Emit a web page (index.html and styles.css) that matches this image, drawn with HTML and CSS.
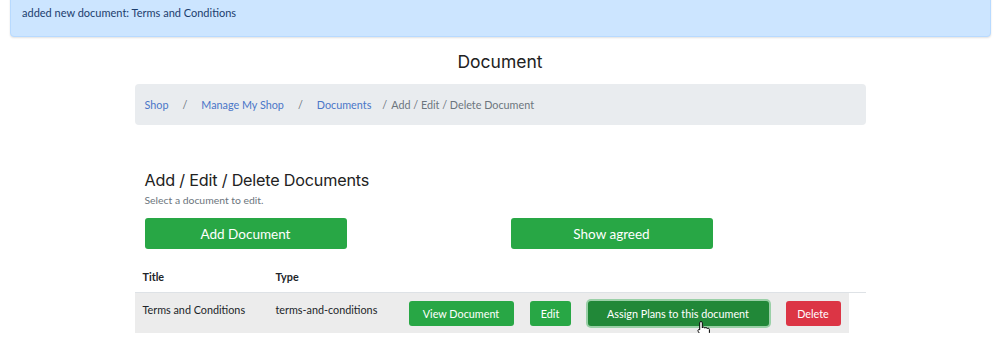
FILE: index.html
```html
<!DOCTYPE html>
<html lang="en">

<head>
  <meta charset="UTF-8">
  <meta name="viewport" content="width=device-width, initial-scale=1.0">
  <title>Document</title>
  <link rel="stylesheet" href="styles.css">
</head>

<body>
  <!-- 提示 -->
  <div class="alert">added new document: Terms and Conditions</div>

  <h2 class="page-title">Document</h2>

  <div class="container">
    <div class="breadcrumb">
      <a href="#">Shop</a>
      <span class="sep">/</span>
      <a href="#">Manage My Shop</a>
      <span class="sep">/</span>
      <a href="#">Documents</a>
      <span class="sep last">/</span>
      <span class="current">Add / Edit / Delete Document</span>
    </div>

    <div class="section">
      <h3>Add / Edit / Delete Documents</h3>
      <p class="hint">Select a document to edit.</p>
      <div class="actions">
        <button class="btn btn-big">Add Document</button>
        <button class="btn btn-big">Show agreed</button>
      </div>
    </div>

    <div class="list">
      <div class="row head">
        <div class="col-title">Title</div>
        <div class="col-type">Type</div>
      </div>
      <div class="row item">
        <div class="col-title">Terms and Conditions</div>
        <div class="col-type">terms-and-conditions</div>
        <div class="col-btns">
          <button class="btn btn-sm view">View Document</button>
          <button class="btn btn-sm edit">Edit</button>
          <button class="btn btn-sm assign">Assign Plans to this document
            <svg class="cursor" width="14" height="18" viewBox="0 0 14 18">
              <path d="M4 1.5c.8 0 1.3.5 1.3 1.3v5.2c.2-.6.7-.9 1.3-.9.7 0 1.2.5 1.2 1.1.2-.4.6-.7 1.2-.7.7 0 1.2.5 1.2 1.2.2-.3.6-.5 1-.5.7 0 1.2.5 1.2 1.2v3.4c0 2.3-1.6 4.2-4 4.2H6.6c-1.2 0-2-.5-2.7-1.4L1.2 11.4c-.4-.6-.3-1.3.2-1.7.5-.4 1.2-.3 1.6.2l-.3-.4V2.8c0-.8.5-1.3 1.3-1.3z" fill="#fff" stroke="#000" stroke-width="1"/>
            </svg>
          </button>
          <button class="btn btn-sm delete">Delete</button>
        </div>
      </div>
    </div>
  </div>
</body>

</html>
```

FILE: styles.css
```css
body {
  margin: 0;
  padding: 0;
  background-color: #fff;
  font-family: Lato, "Open Sans", sans-serif;
  color: #212529;
}

.alert {
  margin: -20px 9px 0 10px;
  padding: 24px 11px 15px;
  height: 16px;
  font-size: 11px;
  line-height: 16px;
  color: #1c3e6e;
  background-color: #cce5ff;
  border: 1px solid #b8daff;
  border-radius: 4px;
  box-shadow: 0 1px 2px rgba(0, 0, 0, 0.12);
}

.page-title {
  margin: 13px 0 0;
  height: 24px;
  text-align: center;
  font-family: Inter, sans-serif;
  font-weight: 400;
  font-size: 17.5px;
  line-height: 24px;
  color: #222;
}

.container {
  width: 731px;
  margin: 10px auto 0;
}

.breadcrumb {
  display: flex;
  align-items: center;
  height: 41px;
  padding: 0 10px;
  background-color: #e9ecef;
  border-radius: 4px;
  font-size: 10.8px;
}

.breadcrumb a {
  color: #4a76c8;
  text-decoration: none;
}

.breadcrumb .sep {
  color: #6c757d;
  margin: 0 14px 0 14px;
}

.breadcrumb .sep.last {
  margin: 0 4px 0 11px;
}

.breadcrumb .current {
  color: #6c757d;
}

.section {
  padding: 44px 10px 0;
}

.section h3 {
  margin: 0;
  font-family: Inter, sans-serif;
  font-weight: 400;
  font-size: 16.2px;
  line-height: 22px;
  color: #222;
  letter-spacing: -0.2px;
}

.section .hint {
  margin: 2px 0 0;
  font-size: 10.4px;
  line-height: 14px;
  color: #6c757d;
}

.actions {
  display: flex;
  gap: 164px;
  margin-top: 11px;
}

.btn {
  border: none;
  border-radius: 3px;
  color: #fff;
  background-color: #28a745;
  font-family: Lato, "Open Sans", sans-serif;
  white-space: nowrap;
  padding: 0;
  cursor: pointer;
}

.btn-big {
  width: 202px;
  height: 31px;
  font-size: 13.5px;
}

.list {
  margin-top: 12px;
}

.row {
  display: flex;
  align-items: center;
  font-size: 10.8px;
}

.row.head {
  height: 31px;
  font-weight: bold;
  border-bottom: 1px solid #dee2e6;
}

.row.item {
  width: 714px;
  height: 40px;
  background-color: #ececec;
  align-items: flex-start;
}

.col-title {
  width: 133px;
  padding-left: 8px;
}

.col-type {
  width: 133px;
}

.row.item .col-title,
.row.item .col-type {
  padding-top: 10px;
}

.col-btns {
  display: flex;
  align-items: center;
  gap: 16px;
  padding-top: 8px;
}

.btn-sm {
  height: 25px;
  font-size: 10.8px;
}

.btn-sm.view {
  width: 105px;
}

.btn-sm.edit {
  width: 41px;
}

.btn-sm.assign {
  position: relative;
  width: 181px;
  margin-left: 1px;
  background-color: #218838;
  box-shadow: 0 0 0 2px rgba(72, 180, 97, 0.5);
}

.btn-sm.delete {
  width: 55px;
  margin-left: 1px;
  background-color: #dc3545;
}

.cursor {
  position: absolute;
  left: 109px;
  top: 19px;
}
```
